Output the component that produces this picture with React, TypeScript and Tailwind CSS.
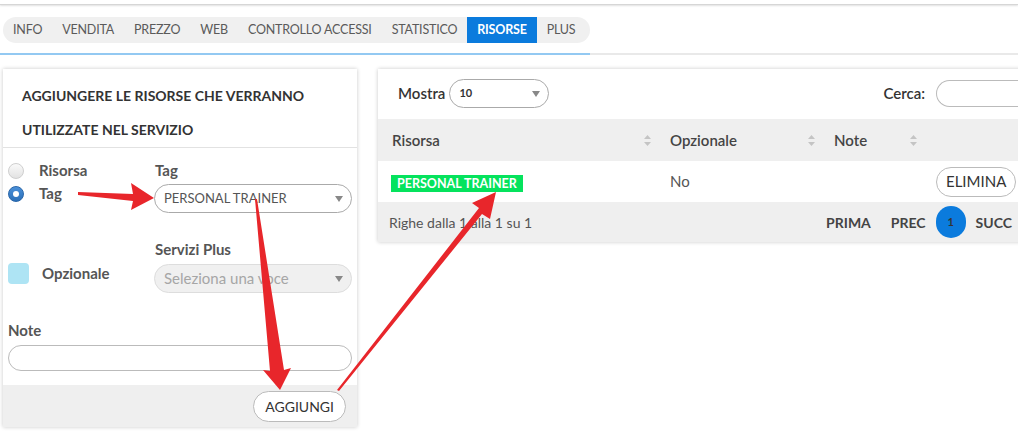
import React from 'react';

const tabs = ['INFO', 'VENDITA', 'PREZZO', 'WEB', 'CONTROLLO ACCESSI', 'STATISTICO', 'RISORSE', 'PLUS'];

const Caret = () => (
  <svg width="8" height="6" viewBox="0 0 8 6" className="shrink-0">
    <path d="M0 0 H8 L4 6 Z" fill="#888" />
  </svg>
);

const Sort = () => (
  <svg width="7" height="11" viewBox="0 0 7 11" className="shrink-0">
    <path d="M3.5 0 L7 4 H0 Z" fill="#c4c4c4" />
    <path d="M0 7 H7 L3.5 11 Z" fill="#c4c4c4" />
  </svg>
);

const Radio = ({ checked }: { checked?: boolean }) =>
  checked ? (
    <span className="w-4 h-4 rounded-full bg-gradient-to-b from-[#4a90d9] to-[#2a6fb8] border border-[#2a66a8] flex items-center justify-center">
      <span className="w-[6px] h-[6px] rounded-full bg-white" />
    </span>
  ) : (
    <span className="w-4 h-4 rounded-full bg-gradient-to-b from-[#fafafa] to-[#e2e2e2] border border-[#cfcfcf]" />
  );

export default function App() {
  return (
    <div className="relative w-[1018px] h-[442px] overflow-hidden bg-white font-['Lato','Liberation_Sans',sans-serif]">
      {/* top strip */}
      <div className="h-[5px] border-b border-[#d6d6d6] shadow-[0_1px_2px_rgba(0,0,0,0.12)]" />

      {/* tabs */}
      <div className="mt-[12px] border-b-2 border-[#e9e9e9]">
        <div className="w-[590px] -mb-[2px] border-b-2 border-[#93c9f2] pb-[10px]">
          <div className="ml-[3px] w-[587px] h-[26px] rounded-full bg-[#f0f0f0] flex items-stretch">
            {tabs.map((t) => (
              <div
                key={t}
                className={
                  t === 'RISORSE'
                    ? 'px-[10px] flex items-center bg-[#0b7bdd] text-white font-bold text-[12.5px] tracking-[-0.2px]'
                    : 'px-[10px] flex items-center text-[#5a5a5a] text-[12.5px] tracking-[-0.2px]'
                }
              >
                {t}
              </div>
            ))}
          </div>
        </div>
      </div>

      {/* panels */}
      <div className="mt-[14px] ml-[3px] flex items-start gap-[21px] w-[1040px]">
        {/* left panel */}
        <div className="w-[354px] bg-white shadow-[0_0_4px_rgba(0,0,0,0.22)]">
          <div className="pt-[10px] px-[19px] border-b border-[#e2e2e2]">
            <div className="leading-[34px] text-[14px] font-bold text-[#333]">AGGIUNGERE LE RISORSE CHE VERRANNO</div>
            <div className="leading-[34px] text-[14px] font-bold text-[#333]">UTILIZZATE NEL SERVIZIO</div>
          </div>

          <div className="px-[5px]">
            <div className="flex">
              <div className="w-[146px] pt-[11px]">
                <div className="h-[23px] flex items-center gap-[15px]">
                  <Radio />
                  <span className="text-[15px] font-bold text-[#555]">Risorsa</span>
                </div>
                <div className="h-[23px] flex items-center gap-[15px]">
                  <Radio checked />
                  <span className="text-[15px] font-bold text-[#555]">Tag</span>
                </div>
              </div>
              <div className="flex-1">
                <div className="mt-[12px] leading-[20px] text-[15px] font-bold text-[#555] pl-[1px]">Tag</div>
                <div className="mt-[4px] h-[29px] rounded-full border border-[#aaa] flex items-center justify-between pl-[9px] pr-[8px]">
                  <span className="text-[13px] text-[#555]">PERSONAL TRAINER</span>
                  <Caret />
                </div>
              </div>
            </div>

            <div className="flex mt-[26px]">
              <div className="w-[146px] pt-[24px] flex items-start gap-[13px]">
                <span className="w-[21px] h-[21px] rounded-[4px] bg-[#aee4f4]" />
                <span className="leading-[21px] text-[15px] font-bold text-[#555]">Opzionale</span>
              </div>
              <div className="flex-1">
                <div className="leading-[20px] text-[15px] font-bold text-[#555] pl-[1px]">Servizi Plus</div>
                <div className="mt-[5px] h-[29px] rounded-full border border-[#ddd] bg-[#f0f0f0] flex items-center justify-between pl-[9px] pr-[8px]">
                  <span className="text-[15px] text-[#a6a6a6]">Seleziona una voce</span>
                  <Caret />
                </div>
              </div>
            </div>

            <div className="mt-[27px] leading-[20px] text-[15px] font-bold text-[#555]">Note</div>
            <div className="mt-[5px] h-[26px] rounded-full border border-[#bbb]" />
          </div>

          <div className="mt-[14px] h-[42px] bg-[#efefef] flex items-center justify-end pr-[11px]">
            <button className="h-[31px] px-[11px] rounded-full bg-white border border-[#bbb] text-[14px] text-[#333]">
              AGGIUNGI
            </button>
          </div>
        </div>

        {/* right panel */}
        <div className="w-[652px] bg-white shadow-[0_0_4px_rgba(0,0,0,0.22)]">
          <div className="pt-[10px] pb-[11px] pl-[20px] flex items-center">
            <span className="text-[15px] font-semibold text-[#333]">Mostra</span>
            <div className="ml-[4px] w-[100px] h-[29px] rounded-full border border-[#aaa] flex items-center justify-between pl-[9px] pr-[8px]">
              <span className="text-[11px] font-bold text-[#333]">10</span>
              <Caret />
            </div>
            <span className="ml-auto text-[15px] font-semibold text-[#333]">Cerca:</span>
            <div className="ml-[11px] w-[94px] h-[27px] rounded-l-full border border-r-0 border-[#bbb]" />
          </div>

          <div className="h-[42px] bg-[#efefef] flex items-center text-[15px] font-semibold text-[#444]">
            <div className="w-[280px] pl-[14px] pr-[7px] flex items-center justify-between">
              <span>Risorsa</span>
              <Sort />
            </div>
            <div className="w-[164px] pl-[12px] pr-[7px] flex items-center justify-between">
              <span>Opzionale</span>
              <Sort />
            </div>
            <div className="w-[101px] pl-[12px] pr-[6px] flex items-center justify-between">
              <span>Note</span>
              <Sort />
            </div>
          </div>

          <div className="h-[41px] flex items-center">
            <div className="w-[280px] pl-[13px]">
              <span className="inline-block bg-[#05e35d] text-white text-[12.5px] font-bold px-[6px] leading-[17px]">
                PERSONAL TRAINER
              </span>
            </div>
            <div className="w-[164px] pl-[12px] text-[15px] text-[#555]">No</div>
            <div className="w-[101px]" />
            <button className="ml-[13px] h-[30px] px-[9px] rounded-full bg-white border border-[#bbb] text-[15px] text-[#333]">
              ELIMINA
            </button>
          </div>

          <div className="h-[40px] bg-[#efefef] flex items-center pl-[11px] text-[#444]">
            <span className="text-[14px] text-[#555]">Righe dalla 1 alla 1 su 1</span>
            <span className="ml-auto text-[14px] font-bold">PRIMA</span>
            <span className="ml-[20px] text-[14px] font-bold">PREC</span>
            <span className="ml-[10px] w-[30px] h-[32px] rounded-full bg-[#0b7bdd] flex items-center justify-center text-[11px] font-bold text-[#333]">
              1
            </span>
            <span className="ml-[10px] mr-[18px] text-[14px] font-bold">SUCC</span>
          </div>
        </div>
      </div>

      {/* annotation arrows */}
      <svg className="absolute inset-0 pointer-events-none" width="1018" height="442" viewBox="0 0 1018 442">
        <g fill="#e8262b">
          {/* arrow to tag select */}
          <path d="M78 192 L133 194 L131 183 L154 198 L131 210 L133 201 L78 195 Z" />
          {/* arrow down to AGGIUNGI */}
          <path d="M255 199 L257 199 L284 370 L291 368 L280 390 L263 370 L270 371 Z" />
          {/* arrow to badge */}
          <path d="M337 390 L339 391 L482 214 L490 219 L496 192 L472 203 L479 208 Z" />
        </g>
      </svg>
    </div>
  );
}
